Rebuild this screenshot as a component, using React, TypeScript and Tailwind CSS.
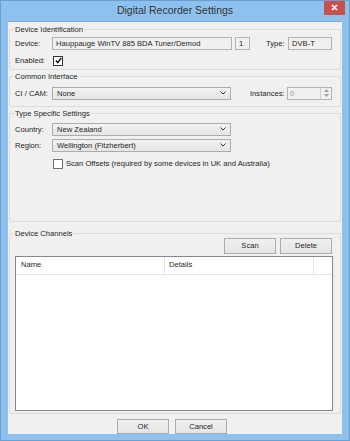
import React from "react";

const F = "font-['Liberation_Sans',Arial,sans-serif]";

function Group({ label, className, children }: { label: string; className?: string; children?: React.ReactNode }) {
  return (
    <div className={`relative mx-[1px] border border-[#dcdcdc] rounded-[2px] ${className ?? ""}`}>
      <span className="absolute left-[4px] top-[-5px] bg-[#f0f0f0] px-[1px] text-[7.6px] leading-[9px] text-[#1e1e1e]">
        {label}
      </span>
      {children}
    </div>
  );
}

function Chevron() {
  return (
    <svg width="6" height="4" viewBox="0 0 6 4" className="mr-[4px]">
      <path d="M0.5 0.5 L3 3 L5.5 0.5" fill="none" stroke="#333" strokeWidth="1" />
    </svg>
  );
}

function Combo({ value, w }: { value: string; w: string }) {
  return (
    <div className={`${w} h-[13px] flex items-center justify-between border border-[#acacac] bg-gradient-to-b from-[#f2f2f2] to-[#e5e5e5] pl-[4px] text-[7.6px] text-[#1e1e1e]`}>
      <span>{value}</span>
      <Chevron />
    </div>
  );
}

function ReadBox({ value, w }: { value: string; w: string }) {
  return (
    <div className={`${w} h-[13px] flex items-center border border-[#b4b4b4] bg-[#f0f0f0] pl-[3px] text-[7.6px] text-[#1e1e1e]`}>
      {value}
    </div>
  );
}

function Btn({ label, w, h }: { label: string; w: string; h: string }) {
  return (
    <div className={`${w} ${h} flex items-center justify-center border border-[#acacac] bg-gradient-to-b from-[#f0f0f0] to-[#e5e5e5] text-[7.6px] text-[#1e1e1e]`}>
      {label}
    </div>
  );
}

export default function App() {
  return (
    <div className={`${F} w-[350px] h-[441px] bg-[#8fc1ef] border border-[#6a9fd6] flex flex-col overflow-hidden`}>
      {/* title bar */}
      <div className="h-[20px] flex items-start relative">
        <div className="flex-1 flex justify-center pt-[3px] text-[10.5px] leading-[13px] text-[#333]">
          Digital Recorder Settings
        </div>
        <div className="absolute right-[4px] top-[-1px] w-[21px] h-[15px] bg-[#c75050] flex items-center justify-center">
          <svg width="7" height="7" viewBox="0 0 7 7">
            <path d="M1 1 L6 6 M6 1 L1 6" stroke="#fff" strokeWidth="1.6" />
          </svg>
        </div>
      </div>

      {/* client */}
      <div className="mx-[7px] h-[413px] bg-[#f0f0f0] flex flex-col border border-[#7ea9d6] border-b-0 border-r-0 border-l-0">
        <Group label="Device Identification" className="mt-[7px] h-[41px]">
          <div className="pl-[5px] pt-[7px] flex items-center text-[7.6px] text-[#1e1e1e]">
            <span className="w-[37px]">Device:</span>
            <ReadBox value="Hauppauge WinTV 885 BDA Tuner/Demod" w="w-[180px]" />
            <div className="ml-[3px] w-[15px] h-[13px] border border-[#b4b4b4] bg-[#f0f0f0] flex items-center pl-[3px]">1</div>
            <span className="ml-[16px] w-[22px]">Type:</span>
            <ReadBox value="DVB-T" w="w-[44px]" />
          </div>
          <div className="pl-[5px] pt-[5px] flex items-center text-[7.6px] text-[#1e1e1e]">
            <span className="w-[38px]">Enabled:</span>
            <div className="w-[10px] h-[10px] border border-[#333] bg-white flex items-center justify-center">
              <svg width="7" height="7" viewBox="0 0 7 7">
                <path d="M0.8 3.6 L2.7 5.6 L6.3 1" fill="none" stroke="#111" strokeWidth="1.4" />
              </svg>
            </div>
          </div>
        </Group>

        <Group label="Common Interface" className="mt-[6px] h-[31px]">
          <div className="pl-[5px] pt-[10px] flex items-center text-[7.6px] text-[#1e1e1e]">
            <span className="w-[37px]">CI / CAM:</span>
            <Combo value="None" w="w-[179px]" />
            <span className="ml-[19px] w-[37px] text-[#1e1e1e]">Instances:</span>
            <div className="w-[45px] h-[13px] border border-[#b4b4b4] bg-[#f0f0f0] flex items-center justify-between text-[#9a9a9a]">
              <span className="pl-[2px]">0</span>
              <div className="w-[11px] h-full border-l border-[#d0d0d0] flex flex-col items-center justify-center gap-[2px]">
                <svg width="5" height="3" viewBox="0 0 5 3"><path d="M0 3 L2.5 0 L5 3Z" fill="#a0a0a0" /></svg>
                <svg width="5" height="3" viewBox="0 0 5 3"><path d="M0 0 L2.5 3 L5 0Z" fill="#a0a0a0" /></svg>
              </div>
            </div>
          </div>
        </Group>

        <Group label="Type Specific Settings" className="mt-[6px] h-[109px]">
          <div className="pl-[5px] pt-[9px] flex items-center text-[7.6px] text-[#1e1e1e]">
            <span className="w-[37px]">Country:</span>
            <Combo value="New Zealand" w="w-[179px]" />
          </div>
          <div className="pl-[5px] pt-[3px] flex items-center text-[7.6px] text-[#1e1e1e]">
            <span className="w-[37px]">Region:</span>
            <Combo value="Wellington (Fitzherbert)" w="w-[179px]" />
          </div>
          <div className="pl-[43px] pt-[6px] flex items-center text-[7.6px] text-[#1e1e1e]">
            <div className="w-[10px] h-[10px] border border-[#707070] bg-white" />
            <span className="ml-[3px]">Scan Offsets (required by some devices in UK and Australia)</span>
          </div>
        </Group>

        <Group label="Device Channels" className="mt-[11px] h-[182px]">
          <div className="pt-[4px] pr-[8px] flex justify-end gap-[4px]">
            <Btn label="Scan" w="w-[52px]" h="h-[16px]" />
            <Btn label="Delete" w="w-[52px]" h="h-[16px]" />
          </div>
          <div className="ml-[5px] mt-[2px] w-[318px] h-[155px] border border-[#828790] bg-white">
            <div className="h-[18px] flex text-[7.6px] text-[#1e1e1e] border-b border-[#e5e5e5]">
              <div className="w-[149px] border-r border-[#e5e5e5] flex items-center pl-[5px]">Name</div>
              <div className="w-[149px] border-r border-[#e5e5e5] flex items-center pl-[4px]">Details</div>
            </div>
          </div>
        </Group>

        <div className="mt-[5px] flex justify-center gap-[6px] pr-[6px]">
          <Btn label="OK" w="w-[52px]" h="h-[15px]" />
          <Btn label="Cancel" w="w-[52px]" h="h-[15px]" />
        </div>
      </div>
    </div>
  );
}
